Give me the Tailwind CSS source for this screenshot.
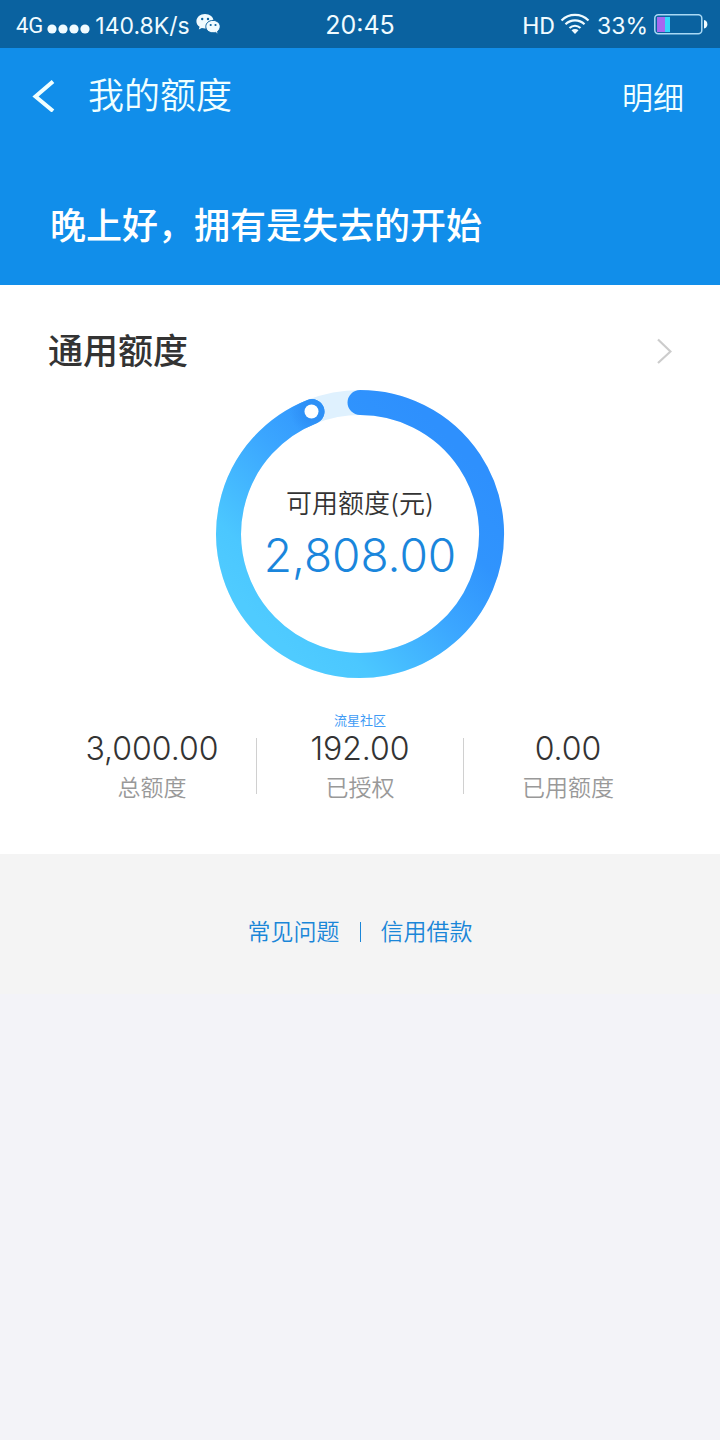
<!DOCTYPE html>
<html lang="zh-CN">
<head>
<meta charset="utf-8">
<meta name="viewport" content="width=device-width, initial-scale=1">
<title>我的额度</title>
<script src="https://cdn.jsdelivr.net/npm/@tailwindcss/browser@4"></script>
</head>
<body class="min-h-screen bg-[#f3f3f8] font-['Inter','Noto_Sans_CJK_SC',sans-serif] text-[#333333]">

<!-- Status bar -->
<div class="grid h-12 grid-cols-3 items-center bg-[#0a62a0] pt-1 pr-3 pl-4 text-2xl text-[#f0fbff]">
  <div class="flex items-center whitespace-nowrap">
    <span class="font-['Roboto'] text-[22px] font-normal">4G</span>
    <svg class="ml-1 mt-2 h-3 w-11 shrink-0" viewBox="0 0 44 12" fill="currentColor" aria-hidden="true">
      <circle cx="5" cy="5" r="4.600"/><circle cx="16" cy="5" r="4.600"/><circle cx="27" cy="5" r="4.600"/><circle cx="38" cy="5" r="4.600"/>
    </svg>
    <span class="ml-1 text-[23px]">140.8K/s</span>
    <svg class="ml-1.5 mb-1 h-6 w-6 shrink-0" viewBox="0 0 24 24" aria-hidden="true">
      <path fill="currentColor" d="M9 2C4.200 2 .4 5.200 .4 9.200c0 2.300 1.200 4.300 3.200 5.600L2.800 17.600l3-1.600c1 .3 2.100 .5 3.200 .5 4.800 0 8.600-3.200 8.600-7.300S13.800 2 9 2z"/>
      <path fill="currentColor" stroke="#0a62a0" stroke-width="1" d="M17 8.400c-4.100 0-7.200 2.700-7.200 6.200s3.100 6.200 7.200 6.200c.9 0 1.700-.1 2.500-.4l2.700 1.900-.6-3c1.700-1.200 2.600-2.900 2.600-4.700 0-3.500-3.200-6.200-7.200-6.200z"/>
      <circle cx="6.200" cy="7" r="1.200" fill="#0a62a0"/><circle cx="12" cy="7" r="1.200" fill="#0a62a0"/>
      <circle cx="14.700" cy="13" r="1.100" fill="#0a62a0"/><circle cx="19.500" cy="13" r="1.100" fill="#0a62a0"/>
    </svg>
  </div>
  <div class="pr-1 text-center text-[25px]">20:45</div>
  <div class="flex items-center justify-end whitespace-nowrap">
    <span class="font-['Roboto'] text-2xl leading-9 font-normal">HD</span>
    <svg class="ml-1 mb-1 h-6 w-8 shrink-0" viewBox="0 0 32 24" fill="none" stroke="currentColor" stroke-width="2.200" aria-hidden="true">
      <path d="M2.500 8.500C10 1 22 1 29.500 8.500M6.500 12.200c5.400-5.200 13.600-5.200 19 0M10.500 16c3.300-3 7.700-3 11 0"/>
      <path d="M12.500 18.300c2-1.700 5-1.700 7 0L16 22z" fill="currentColor" stroke="none"/>
    </svg>
    <span class="ml-1.5 text-[23px]">33%</span>
    <svg class="ml-1 mb-1 h-6 w-14 shrink-0" viewBox="0 0 56 24" aria-hidden="true">
      <rect x="2.800" y="2.800" width="47" height="19" rx="3.500" fill="none" stroke="#a9d9f5" stroke-width="1.500"/>
      <path fill="#a768ef" d="M5 5h8v15H5z"/><path fill="#35d7fb" d="M13 5h5v15h-5z"/>
      <path fill="currentColor" d="M52 8c4.500 1 4.500 7.500 0 8.500z"/>
    </svg>
  </div>
</div>

<!-- Title bar and greeting -->
<header class="bg-[#118eea] text-[#f0ffff]">
  <div class="flex h-24 items-center justify-between pr-9 pl-8">
    <div class="flex items-center">
      <button type="button" aria-label="返回" class="flex h-12 w-6 items-center">
        <svg class="h-8 w-6" viewBox="0 0 24 32" fill="none" stroke="currentColor" stroke-width="4" aria-hidden="true"><path d="M21 1.500L3.500 16.500 21 31"/></svg>
      </button>
      <h1 class="ml-8 text-4xl font-[350]">我的额度</h1>
    </div>
    <a href="#detail" class="pt-1 text-[31px] font-[350]">明细</a>
  </div>
  <p class="px-[50px] pt-[60px] pb-9 text-4xl leading-[45px] font-medium text-white">晚上好，拥有是失去的开始</p>
</header>

<!-- Quota card -->
<main class="bg-white px-12 pt-10 pb-12">
  <a href="#quota" class="flex h-[52px] items-center justify-between">
    <h2 class="text-[35px] font-medium">通用额度</h2>
    <svg class="h-7 w-4" viewBox="0 0 16 28" fill="none" stroke="#cccccc" stroke-width="2.200" aria-hidden="true"><path d="M2 2.500l12.500 12L2 26"/></svg>
  </a>

  <div class="mx-auto mt-3 grid size-[290px] place-items-center">
    <svg class="col-start-1 row-start-1 size-full" viewBox="0 0 290 290" fill="none" aria-hidden="true">
      <defs>
        <linearGradient id="ring" gradientUnits="userSpaceOnUse" x1="238" y1="52" x2="52" y2="238">
          <stop offset="0" stop-color="#2e90fd"/><stop offset=".25" stop-color="#3094fd"/><stop offset=".5" stop-color="#3ba6ff"/><stop offset=".85" stop-color="#4bc7ff"/><stop offset="1" stop-color="#4fcbff"/>
        </linearGradient>
        <radialGradient id="tip" gradientUnits="userSpaceOnUse" cx="99" cy="22" r="24">
          <stop offset="0" stop-color="#2e90f6"/><stop offset=".4" stop-color="#2e90f6"/><stop offset="1" stop-color="#2e90f6" stop-opacity="0"/>
        </radialGradient>
      </defs>
      <circle cx="145" cy="145" r="131.500" stroke="#dff1fe" stroke-width="25"/>
      <path d="M145 13.500A131.500 131.500 0 1 1 97 22.600" stroke="url(#ring)" stroke-width="25" stroke-linecap="round"/>
      <path d="M70 37A131.500 131.500 0 0 1 97 22.600" stroke="url(#tip)" stroke-width="25" stroke-linecap="round"/>
      <circle cx="96.500" cy="22.500" r="7" fill="#fff"/>
    </svg>
    <div class="col-start-1 row-start-1 flex flex-col items-center pt-1.5">
      <p class="text-[26px] leading-9 font-[350]">可用额度(元)</p>
      <p class="text-[46px] leading-[66px] font-light text-[#1a86dc]">2,808.00</p>
    </div>
  </div>

  <dl class="mt-[33px] grid grid-cols-3 items-end text-center">
    <div class="flex flex-col-reverse">
      <dt class="text-[23px] leading-9 font-[350] text-[#999999]">总额度</dt>
      <dd class="text-[32px] leading-[42px] font-light">3,000.00</dd>
    </div>
    <div class="grid grid-cols-[1px_1fr_1px] items-end">
      <span class="mb-3 h-14 bg-[#d0d0d0]"></span>
      <div class="flex flex-col-reverse">
        <dt class="text-[23px] leading-9 font-[350] text-[#999999]">已授权</dt>
        <dd class="text-[32px] leading-[42px] font-light"><small class="block text-[13px] leading-4 font-normal text-[#3f9bf5]">流星社区</small>192.00</dd>
      </div>
      <span class="mb-3 h-14 bg-[#d0d0d0]"></span>
    </div>
    <div class="flex flex-col-reverse">
      <dt class="text-[23px] leading-9 font-[350] text-[#999999]">已用额度</dt>
      <dd class="text-[32px] leading-[42px] font-light">0.00</dd>
    </div>
  </dl>
</main>

<!-- Footer links -->
<footer class="flex items-center justify-center bg-[#f4f4f4] pt-15 pb-11 text-[23px] leading-9 font-[350] text-[#1a86d8]">
  <a href="#faq">常见问题</a>
  <span class="mx-5 h-5 w-px bg-[#1a86d8]"></span>
  <a href="#loan">信用借款</a>
</footer>

</body>
</html>
